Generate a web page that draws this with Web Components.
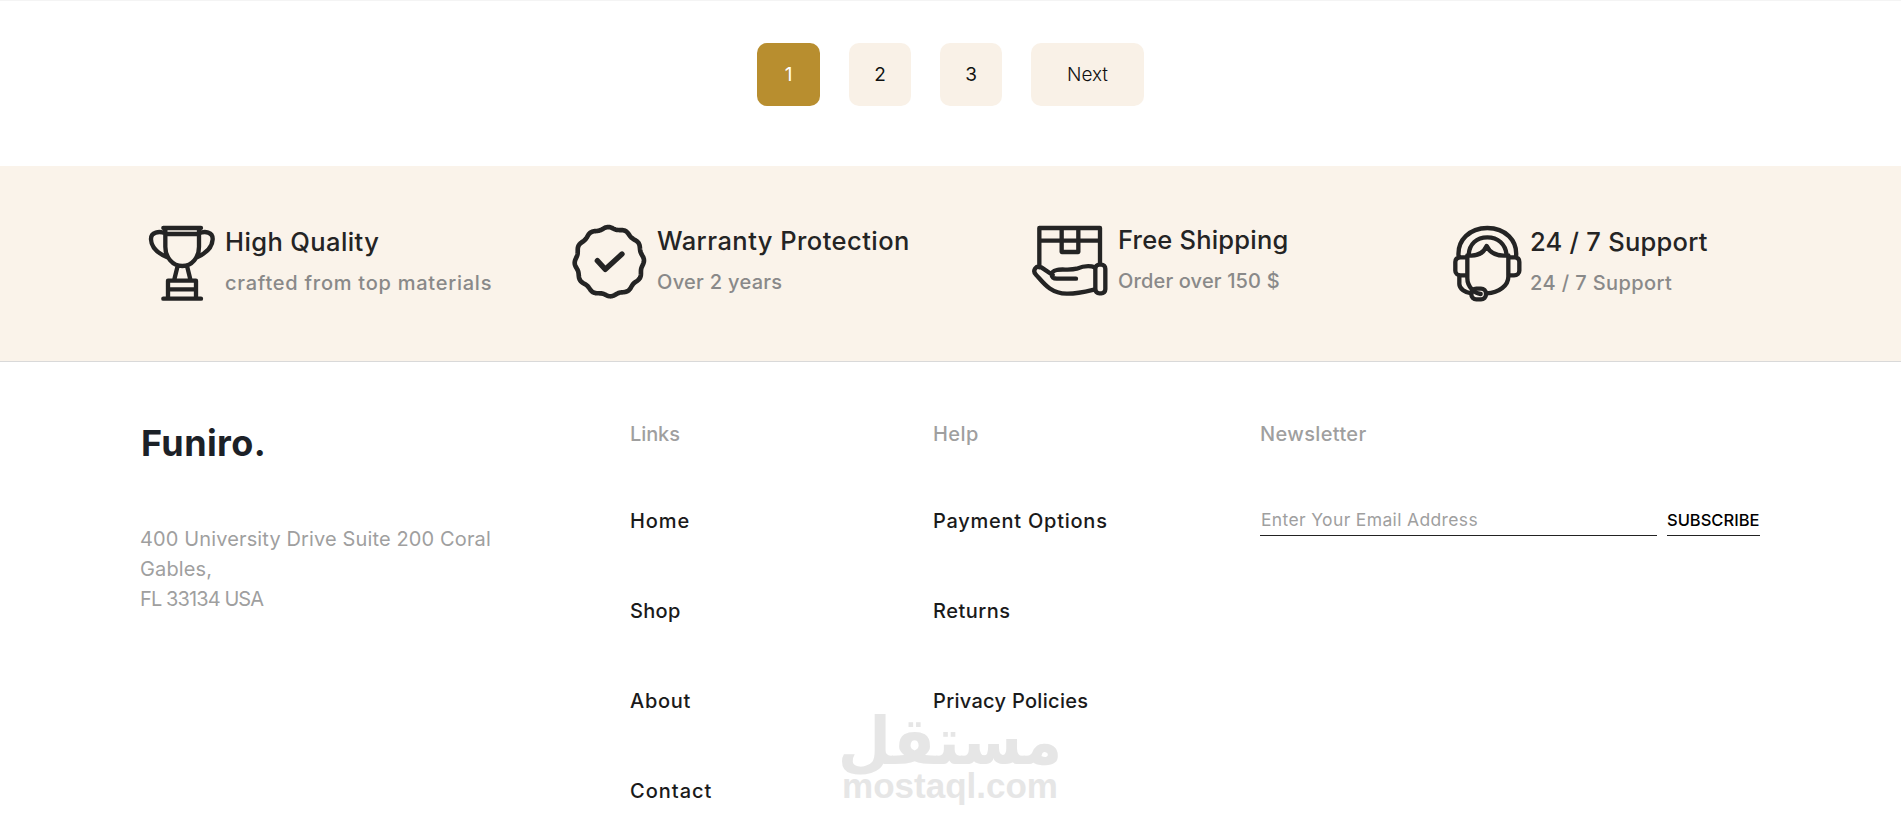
<!DOCTYPE html>
<html lang="en"><head><meta charset="utf-8"><title>Funiro</title>
<style>
html,body{margin:0;padding:0;height:828px;overflow:hidden;background:#fff}
body{font-family:Inter,"Open Sans","Liberation Sans",sans-serif;color:#1c1c1c;border-top:1px solid #f4f4f4;box-sizing:border-box}
</style></head><body>
<shop-pagination><page-btn active>1</page-btn><page-btn>2</page-btn><page-btn>3</page-btn><page-btn wide>Next</page-btn></shop-pagination>
<feature-band>
<feature-item style="--w:423px;--gap:11px;--ts:.4px;--ss:.75px;--dy:0px" data-icon="trophy" data-title="High Quality" data-sub="crafted from top materials"></feature-item>
<feature-item style="--w:460px;--gap:10px;--ts:.45px;--ss:.3px;--dy:-1px" data-icon="badge" data-title="Warranty Protection" data-sub="Over 2 years"></feature-item>
<feature-item style="--w:421px;--gap:11px;--ts:.2px;--ss:.15px;--dy:-2px" data-icon="box" data-title="Free Shipping" data-sub="Order over 150 $"></feature-item>
<feature-item style="--w:300px;--gap:10px;--ts:.25px;--ss:.4px;--dy:0px" data-icon="headset" data-title="24 / 7 Support" data-sub="24 / 7 Support"></feature-item>
</feature-band>
<site-footer>
<footer-brand></footer-brand>
<footer-col style="--w:303px;--hs:-.1px" heading="Links"><a style="letter-spacing:.9px">Home</a><a style="letter-spacing:.3px">Shop</a><a style="letter-spacing:.7px">About</a><a style="letter-spacing:1px">Contact</a></footer-col>
<footer-col style="--w:327px;--hs:.4px" heading="Help"><a style="letter-spacing:.75px">Payment Options</a><a style="letter-spacing:.5px">Returns</a><a style="letter-spacing:.3px">Privacy Policies</a></footer-col>
<news-letter></news-letter>
</site-footer>
<water-mark></water-mark>
<script>
const def=(n,css,html)=>customElements.define(n,class extends HTMLElement{
  constructor(){super();this.attachShadow({mode:"open"}).innerHTML=`<style>${css}</style>`;this._h=html}
  connectedCallback(){if(!this._d){this._d=1;this.shadowRoot.innerHTML+=typeof this._h==="function"?this._h(this):this._h}}
});
def("shop-pagination",":host{display:flex;justify-content:flex-start;gap:29px;padding:42px 0 60px 757px}","<slot></slot>");
def("page-btn",`:host{display:flex;align-items:center;justify-content:center;width:62px;height:63px;border-radius:10px;background:#f9f1e7;color:#111;font-size:19px;font-weight:400}
:host([active]){width:63px;background:#b88e2f;color:#fff}
:host([wide]){width:113px;font-weight:300}`,"<slot></slot>");
def("feature-band",":host{display:flex;box-sizing:border-box;height:196px;background:#faf3ea;border-bottom:1px solid #d9d9d9;padding:60px 0 0 149px}","<slot></slot>");
const scallop=()=>{let d="";const cx=148,cy=155,n=12,r=101,a=3;for(let i=0;i<=240;i++){const t=i/240*Math.PI*2;const R=r+a*Math.cos(n*t+.5);d+=(i?"L":"M")+(cx+R*Math.cos(t)).toFixed(1)+" "+(cy+R*Math.sin(t)).toFixed(1)}return d+"Z"};
const icons={
trophy:`<svg width="65" height="75" viewBox="57 48 195 225"><path d="M100 54H213M106 54V110C106 142 128 168 157 168C186 168 207 142 207 110V54M106 72H207M106 70C88 62 62 66 63 88C64 112 84 130 112 142M207 70C225 62 249 66 248 88C247 112 227 130 201 142M142 172L132 212M172 172L182 212M114 212H198V265M114 212V265M114 238H198M100 266H213"/></svg>`,
badge:`<svg width="75" height="72" viewBox="36 48 225 216"><path d="${scallop()}" stroke-width="14"/><path d="M112 152L136 178L186 132" stroke-width="16"/></svg>`,
box:`<svg width="75" height="72" viewBox="36 48 225 216"><path d="M58 172V54H240V158M58 92H240M125 54V126H175V54M225 172C205 165 190 168 170 176C150 182 125 176 110 180C90 184 90 206 110 206H168M98 195L64 172C48 164 36 182 48 194C70 218 90 250 140 251C170 252 200 244 225 238"/><rect x="226" y="164" width="30" height="86" rx="12"/></svg>`,
headset:`<svg width="67" height="76" viewBox="39 48 201 228"><path d="M56 142C50 90 90 54 142 54C194 54 234 90 228 142M86 134C88 102 110 82 142 82C174 82 196 102 200 134M82 136C110 140 130 130 140 108C150 130 174 140 205 136M82 136V205C82 232 105 250 122 252M205 136V200C205 226 178 248 140 250M82 142H62C50 142 46 148 46 156V182C46 190 52 196 62 196H82M205 142H224C234 142 238 148 238 156V182C238 190 232 196 222 196H205M58 196V222C58 236 76 248 94 250"/><rect x="94" y="236" width="44" height="32" rx="15"/></svg>`};
def("feature-item",`:host{display:flex;align-items:flex-start;gap:var(--gap);width:var(--w);flex:none}
svg{display:block;flex:none;overflow:visible;fill:none;stroke:#242424;stroke-width:13;stroke-linecap:round;stroke-linejoin:round}
.x{margin-top:var(--dy)}
.t{font-size:25.5px;font-weight:500;line-height:36px;margin-top:-2px;color:#242424;white-space:nowrap;letter-spacing:var(--ts)}
.s{font-size:20px;font-weight:500;line-height:30px;margin-top:8px;color:#898989;white-space:nowrap;letter-spacing:var(--ss)}`,
h=>`${icons[h.dataset.icon]}<div class="x"><div class="t">${h.dataset.title}</div><div class="s">${h.dataset.sub}</div></div>`);
def("site-footer",":host{display:flex;padding:57px 0 0 140px;align-items:flex-start}","<slot></slot>");
def("footer-brand",`:host{display:block;width:490px;flex:none}
.l{font-size:36px;font-weight:700;line-height:46px;letter-spacing:.4px;color:#1c2127;margin:1px 0 58px 1px}
.a{font-size:20px;line-height:30px;color:#9f9f9f;width:380px;letter-spacing:.13px}
.n{letter-spacing:-.9px}`,
`<div class="l">Funiro.</div><div class="a">400 University Drive Suite 200 Coral<br>Gables,<br><span class="n">FL 33134 USA</span></div>`);
def("footer-col",`:host{display:block;width:var(--w);flex:none}
h4{margin:0 0 57px;font-size:20px;font-weight:500;line-height:30px;color:#9f9f9f;letter-spacing:var(--hs)}
::slotted(a){display:block;height:30px;line-height:30px;margin-bottom:60px;font-size:20px;font-weight:500;color:#1a1a1a}`,
h=>`<h4>${h.getAttribute("heading")}</h4><slot></slot>`);
def("news-letter",`:host{display:block;width:505px;flex:none}
h4{margin:0 0 56px;font-size:20px;font-weight:500;line-height:30px;color:#9f9f9f;letter-spacing:.35px}
.r{display:flex;gap:10px;align-items:flex-start}
.i{width:397px;box-sizing:border-box;border-bottom:1px solid #222;font-size:17.5px;line-height:30px;padding:0 0 0 1px;color:#9f9f9f;letter-spacing:.35px}
.b{width:93px;box-sizing:border-box;border-bottom:1px solid #222;font-size:16.5px;font-weight:500;line-height:30px;color:#000;white-space:nowrap}`,
`<h4>Newsletter</h4><div class="r"><div class="i">Enter Your Email Address</div><div class="b">SUBSCRIBE</div></div>`);
def("water-mark",`:host{position:absolute;left:840px;top:712px;width:220px;text-align:center;color:#e6e6e6;font-family:"DejaVu Sans",sans-serif;font-weight:700;pointer-events:none}
.ar{font-size:66px;line-height:60px;direction:rtl;transform:translateX(10px) scaleX(.93);white-space:nowrap}
.en{font-family:"Liberation Sans",sans-serif;font-size:35px;line-height:20px;margin-top:4px}`,
`<div class="ar" lang="ar">مستقل</div><div class="en">mostaql.com</div>`);
</script>
</body></html>
